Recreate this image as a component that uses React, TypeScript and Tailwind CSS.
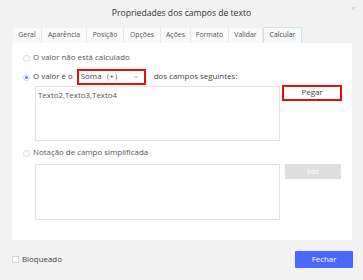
import { X, ChevronDown } from 'lucide-react'

const tabs = [
  { label: 'Geral', w: 'w-[29px]' },
  { label: 'Aparência', w: 'w-[45px]' },
  { label: 'Posição', w: 'w-[37px]' },
  { label: 'Opções', w: 'w-[37px]' },
  { label: 'Ações', w: 'w-[30px]' },
  { label: 'Formato', w: 'w-[38px]' },
  { label: 'Validar', w: 'w-[34px]' },
]

function Radio({ checked }: { checked?: boolean }) {
  return (
    <span className="w-[7px] h-[7px] rounded-full border border-[#d6d6d6] bg-white flex items-center justify-center shrink-0">
      {checked && <span className="w-[3px] h-[3px] rounded-full bg-[#3b82f6]" />}
    </span>
  )
}

export default function App() {
  return (
    <div
      className="w-[363px] h-[280px] bg-[#f2f2f2] flex flex-col text-[7.9px] text-[#333]"
      style={{ fontFamily: '"Open Sans", "Noto Sans", sans-serif' }}
    >
      <div className="h-[27px] flex items-center justify-center relative">
        <span className="text-[8.6px] text-[#333] mt-[-1px]">Propriedades dos campos de texto</span>
        <X className="absolute right-[6px] top-[5px] w-[7px] h-[7px] text-[#999]" strokeWidth={1.5} />
      </div>

      <div className="flex px-[13px] h-[16px]">
        {tabs.map(t => (
          <div
            key={t.label}
            className={`${t.w} h-[15px] mt-[1px] bg-[#fafafa] border-r border-[#e6e6e6] flex items-center justify-center text-[6.9px] text-[#555] shrink-0`}
          >
            {t.label}
          </div>
        ))}
        <div className="w-[39px] h-[16px] bg-[#f9f9f9] border border-b-0 border-[#cde6f2] flex items-center justify-center text-[6.9px] text-[#444] shrink-0">
          Calcular
        </div>
      </div>

      <div className="mx-[12px] w-[340px] h-[197px] bg-white flex flex-col pl-[11px] pr-[10px] pt-[10px]">
        <div className="flex items-center gap-[3px] h-[10px] text-[#555]">
          <Radio />
          <span>O valor não está calculado</span>
        </div>
        <div className="flex items-center h-[16px] mt-[6px] text-[#444]">
          <Radio checked />
          <span className="ml-[3px]">O valor é o</span>
          <div className="ml-[4px] w-[69px] h-[16px] border-2 border-[#e01010] flex items-center justify-between pl-[2px] pr-[5px]">
            <span>Soma（+）</span>
            <ChevronDown className="w-[6px] h-[6px] text-[#666]" strokeWidth={2} />
          </div>
          <span className="ml-[8px]">dos campos seguintes:</span>
        </div>
        <div className="flex mt-[1px]">
          <div className="ml-[12px] w-[245px] h-[55px] border border-[#e2e2e2] px-[2px] pt-[3px] text-[#555]">
            Texto2,Texto3,Texto4
          </div>
          <div className="ml-[2px] w-[60px] h-[16px] border-2 border-[#e01010] flex items-center justify-center text-[#444] -mt-[1px]">
            Pegar
          </div>
        </div>
        <div className="flex items-center gap-[3px] h-[10px] mt-[7px] text-[#555]">
          <Radio />
          <span>Notação de campo simplificada</span>
        </div>
        <div className="flex mt-[6px]">
          <div className="ml-[12px] w-[245px] h-[56px] border border-[#e2e2e2]" />
          <div className="ml-[5px] w-[56px] h-[15px] bg-[#dedede] flex items-center justify-center text-white text-[6.5px]">
            Edit
          </div>
        </div>
      </div>

      <div className="flex items-center justify-between pl-[12px] pr-[10px] mt-[11px]">
        <div className="flex items-center gap-[3px] text-[#444]">
          <span className="w-[7px] h-[7px] border border-[#d6d6d6] bg-white" />
          <span>Bloqueado</span>
        </div>
        <div className="w-[58px] h-[17px] bg-[#4a68ff] rounded-[1px] flex items-center justify-center text-white">
          Fechar
        </div>
      </div>
    </div>
  )
}
